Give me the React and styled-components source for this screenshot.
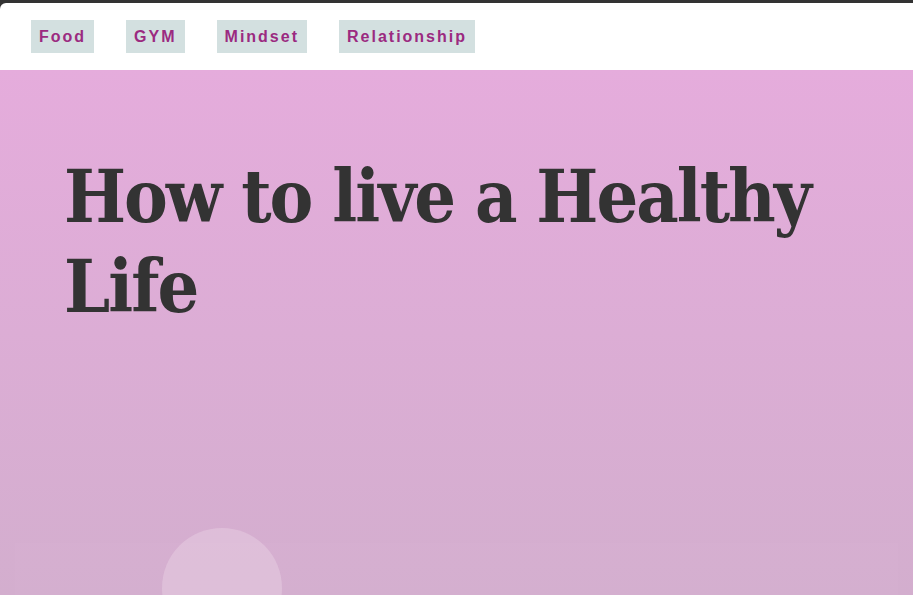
import React from "react";
import styled, { createGlobalStyle } from "styled-components";

const GlobalStyle = createGlobalStyle`
  html, body {
    margin: 0;
    padding: 0;
    height: 100%;
    background: #333333;
    overflow: hidden;
  }
  #root {
    height: 100%;
  }
`;

const Page = styled.div`
  height: 100%;
  padding-top: 3px;
  box-sizing: border-box;
  display: flex;
  flex-direction: column;
`;

const Header = styled.header`
  background: #ffffff;
  border-top-left-radius: 6px;
  height: 67px;
  display: flex;
  align-items: flex-start;
  padding: 17px 0 0 31px;
  box-sizing: border-box;
  gap: 32px;
`;

const NavLink = styled.a`
  display: block;
  height: 33px;
  line-height: 33px;
  padding: 0 8px;
  background: #d3e0e0;
  color: #9b2a80;
  font-family: "Liberation Sans", Arial, sans-serif;
  font-weight: bold;
  font-size: 16px;
  letter-spacing: 2px;
  text-decoration: none;
  cursor: pointer;
`;

const Hero = styled.section`
  flex: 1;
  position: relative;
  overflow: hidden;
  background: linear-gradient(180deg, #e5acdc 0%, #d3aece 100%);
  padding: 81px 40px 0 64px;
`;

const Title = styled.h1`
  position: relative;
  margin: 0;
  color: #333333;
  font-family: "DejaVu Serif Condensed", "DejaVu Serif", serif;
  font-stretch: condensed;
  font-weight: bold;
  font-size: 73px;
  line-height: 90px;
  letter-spacing: -2px;
`;

const Panel = styled.div`
  position: absolute;
  left: 15px;
  right: 15px;
  top: 473px;
  bottom: 0;
  background: rgba(255, 255, 255, 0.025);
`;

const Bubble = styled.div`
  position: absolute;
  left: 162px;
  top: 458px;
  width: 120px;
  height: 120px;
  border-radius: 50%;
  background: rgba(240, 220, 235, 0.35);
`;

const links = ["Food", "GYM", "Mindset", "Relationship"];

export default function App() {
  return (
    <Page>
      <GlobalStyle />
      <Header>
        {links.map((k) => (
          <NavLink key={k}>{k}</NavLink>
        ))}
      </Header>
      <Hero>
        <Panel />
        <Bubble />
        <Title>How to live a Healthy Life</Title>
      </Hero>
    </Page>
  );
}
